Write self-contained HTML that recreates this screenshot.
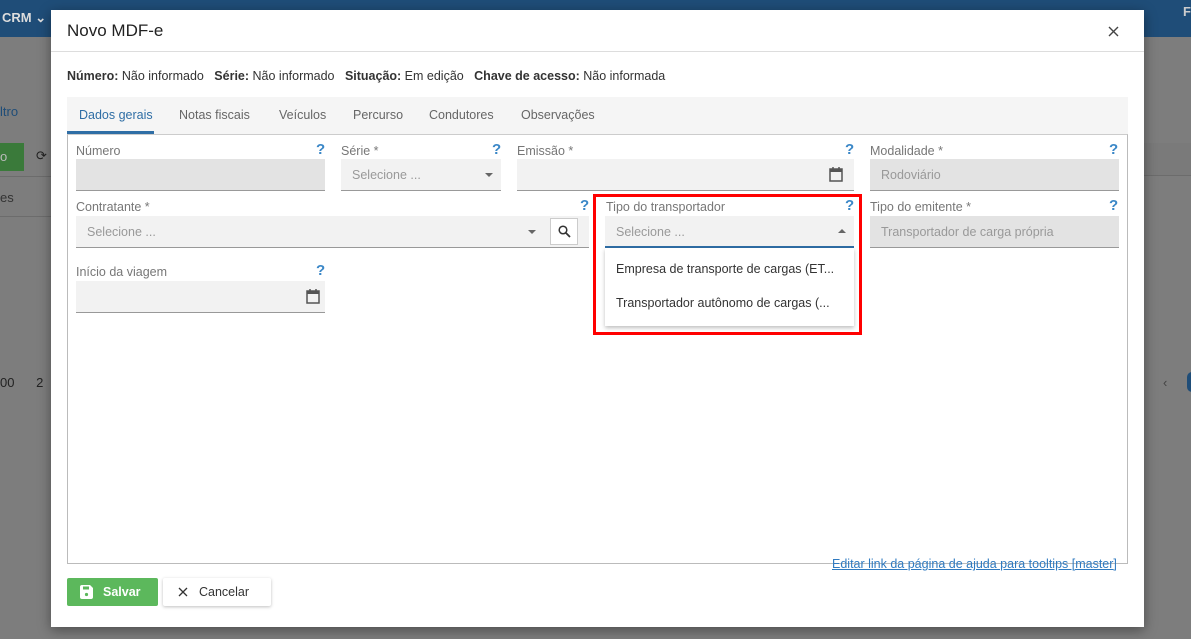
<!DOCTYPE html>
<html><head><meta charset="utf-8"><style>
*{box-sizing:border-box;margin:0;padding:0}
body{width:1191px;height:639px;overflow:hidden;background:#7d7d7d;font-family:"Liberation Sans",sans-serif;position:relative;font-size:13px}
.a{position:absolute}
.top{left:0;top:0;width:1191px;height:37px;background:#1f4d78}
.modal{left:51px;top:10px;width:1093px;height:617px;background:#fff;box-shadow:0 3px 12px rgba(0,0,0,.4)}
.lbl{color:#777;font-size:12.5px}
.q{color:#3a87c7;font-size:15px;font-weight:bold}
.inp{background:#f2f2f2;border-bottom:1px solid #999;height:32px;color:#999;padding:9px 11px;font-size:12.5px}
.dis{background:#e3e3e3}
.tab{color:#666;font-size:12.5px}
.car{position:absolute;top:14px;width:0;height:0;border-left:4px solid transparent;border-right:4px solid transparent}
</style></head><body>
<div class="a top"></div>
<div class="a" style="left:2px;top:10px;color:#ddd;font-weight:bold;font-size:13px">CRM ⌄</div>
<div class="a" style="left:1183px;top:4px;color:#ccc;font-weight:bold;font-size:13px">F</div>
<div class="a" style="left:0;top:104px;color:#1f4d78;font-size:13px">ltro</div>
<div class="a" style="left:0;top:143px;width:24px;height:28px;background:#3a7a3a;color:#bbb;padding:6px 0 0 0">o</div>
<div class="a" style="left:36px;top:148px;color:#222">⟳</div>
<div class="a" style="left:0;top:176px;width:51px;border-top:1px solid #6c6c6c;height:41px;border-bottom:1px solid #6c6c6c;color:#333;padding-top:13px">es</div>
<div class="a" style="left:0;top:375px;color:#222">00 &nbsp;&nbsp;&nbsp;&nbsp;&nbsp;2</div>
<div class="a" style="left:1144px;top:143px;width:47px;height:33px;background:#7a7a7a;border-bottom:1px solid #6c6c6c"></div>
<div class="a" style="left:1163px;top:375px;color:#444">‹</div>
<div class="a" style="left:1187px;top:372px;width:10px;height:20px;border-radius:10px;background:#1f4d78"></div>

<div class="a modal">
 <div class="a" style="left:16px;top:11px;font-size:17px;color:#222">Novo MDF-e</div>
 <svg class="a" style="left:1057px;top:16px" width="11" height="11" viewBox="0 0 11 11"><path d="M1 1L10 10M10 1L1 10" stroke="#444" stroke-width="1.4"/></svg>
 <div class="a" style="left:0;top:41px;width:1093px;border-top:1px solid #ddd"></div>
 <div class="a" style="left:16px;top:59px;font-size:12.5px;color:#333"><b>Número:</b> Não informado &nbsp; <b>Série:</b> Não informado &nbsp; <b>Situação:</b> Em edição &nbsp; <b>Chave de acesso:</b> Não informada</div>
 <div class="a" style="left:16px;top:87px;width:1061px;height:37px;background:#f5f5f5"></div>
 <div class="a tab" style="left:28px;top:98px;color:#2f6ea5">Dados gerais</div>
 <div class="a" style="left:16px;top:121px;width:87px;height:3px;background:#2f6ea5"></div>
 <div class="a tab" style="left:128px;top:98px">Notas fiscais</div>
 <div class="a tab" style="left:228px;top:98px">Veículos</div>
 <div class="a tab" style="left:302px;top:98px">Percurso</div>
 <div class="a tab" style="left:378px;top:98px">Condutores</div>
 <div class="a tab" style="left:470px;top:98px">Observações</div>
 <div class="a" style="left:16px;top:124px;width:1061px;height:430px;border:1px solid #bbb;border-top:1px solid #ccc"></div>

 <div class="a lbl" style="left:25px;top:134px">Número</div><div class="a q" style="left:265px;top:131px">?</div>
 <div class="a inp dis" style="left:25px;top:149px;width:249px"></div>
 <div class="a lbl" style="left:290px;top:134px">Série *</div><div class="a q" style="left:441px;top:131px">?</div>
 <div class="a inp" style="left:290px;top:149px;width:160px">Selecione ...<span class="car" style="right:8px;border-top:4px solid #666"></span></div>
 <div class="a lbl" style="left:466px;top:134px">Emissão *</div><div class="a q" style="left:794px;top:131px">?</div>
 <div class="a inp" style="left:466px;top:149px;width:337px"><svg style="position:absolute;right:11px;top:8px" width="14" height="15" viewBox="0 0 14 15"><rect x="1" y="2" width="12" height="12" fill="none" stroke="#555" stroke-width="1.5"/><rect x="1" y="2" width="12" height="3" fill="#555"/><path d="M4 0v3M10 0v3" stroke="#555" stroke-width="1.5"/></svg></div>
 <div class="a lbl" style="left:819px;top:134px">Modalidade *</div><div class="a q" style="left:1058px;top:131px">?</div>
 <div class="a inp dis" style="left:819px;top:149px;width:249px">Rodoviário</div>

 <div class="a lbl" style="left:25px;top:190px">Contratante *</div><div class="a q" style="left:529px;top:187px">?</div>
 <div class="a inp" style="left:25px;top:206px;width:513px">Selecione ...<span class="car" style="right:53px;border-top:4px solid #666"></span></div>
 <div class="a" style="left:499px;top:208px;width:28px;height:27px;background:#fff;border:1px solid #ccc"><svg style="position:absolute;left:7px;top:6px" width="13" height="13" viewBox="0 0 13 13"><circle cx="5" cy="5" r="3.8" fill="none" stroke="#333" stroke-width="1.5"/><path d="M8 8l4 4" stroke="#333" stroke-width="1.8"/></svg></div>
 <div class="a" style="left:542px;top:184px;width:269px;height:141px;border:3px solid #f00"></div>
 <div class="a lbl" style="left:555px;top:190px">Tipo do transportador</div><div class="a q" style="left:794px;top:187px">?</div>
 <div class="a inp" style="left:554px;top:206px;width:249px;border-bottom:2px solid #2f6ea5">Selecione ...<span class="car" style="right:8px;top:13px;border-bottom:4px solid #666"></span></div>
 <div class="a" style="left:554px;top:238px;width:249px;height:78px;background:#fff;box-shadow:0 2px 4px rgba(0,0,0,.25);color:#333;font-size:12.5px">
  <div style="padding:14px 0 0 11px">Empresa de transporte de cargas (ET...</div>
  <div style="padding:20px 0 0 11px">Transportador autônomo de cargas (...</div>
 </div>
 <div class="a lbl" style="left:819px;top:190px">Tipo do emitente *</div><div class="a q" style="left:1058px;top:187px">?</div>
 <div class="a inp dis" style="left:819px;top:206px;width:249px">Transportador de carga própria</div>

 <div class="a lbl" style="left:25px;top:255px">Início da viagem</div><div class="a q" style="left:265px;top:252px">?</div>
 <div class="a inp" style="left:25px;top:271px;width:249px"><svg style="position:absolute;right:5px;top:8px" width="14" height="15" viewBox="0 0 14 15"><rect x="1" y="2" width="12" height="12" fill="none" stroke="#555" stroke-width="1.5"/><rect x="1" y="2" width="12" height="3" fill="#555"/><path d="M4 0v3M10 0v3" stroke="#555" stroke-width="1.5"/></svg></div>

 <div class="a" style="left:781px;top:547px;color:#2f7ac0;text-decoration:underline;font-size:12.5px">Editar link da página de ajuda para tooltips [master]</div>
 <div class="a" style="left:16px;top:568px;width:91px;height:28px;background:#5cb85c;border-radius:2px;color:#fff;font-weight:bold;padding:7px 0 0 36px;font-size:12.5px">Salvar<svg style="position:absolute;left:13px;top:7px" width="13" height="14" viewBox="0 0 13 14"><path d="M0 2a2 2 0 0 1 2-2h8l3 3v9a2 2 0 0 1-2 2H2a2 2 0 0 1-2-2z" fill="#fff"/><rect x="3" y="1.5" width="6" height="3" fill="#5cb85c"/><circle cx="6.5" cy="9.5" r="1.6" fill="#5cb85c"/></svg></div>
 <div class="a" style="left:112px;top:568px;width:108px;height:28px;background:#fff;border-radius:2px;box-shadow:0 1px 3px rgba(0,0,0,.25);color:#333;padding:7px 0 0 36px;font-size:12.5px">Cancelar<svg style="position:absolute;left:15px;top:9px" width="10" height="10" viewBox="0 0 10 10"><path d="M1 1L9 9M9 1L1 9" stroke="#333" stroke-width="1.3"/></svg></div>
</div>
</body></html>
